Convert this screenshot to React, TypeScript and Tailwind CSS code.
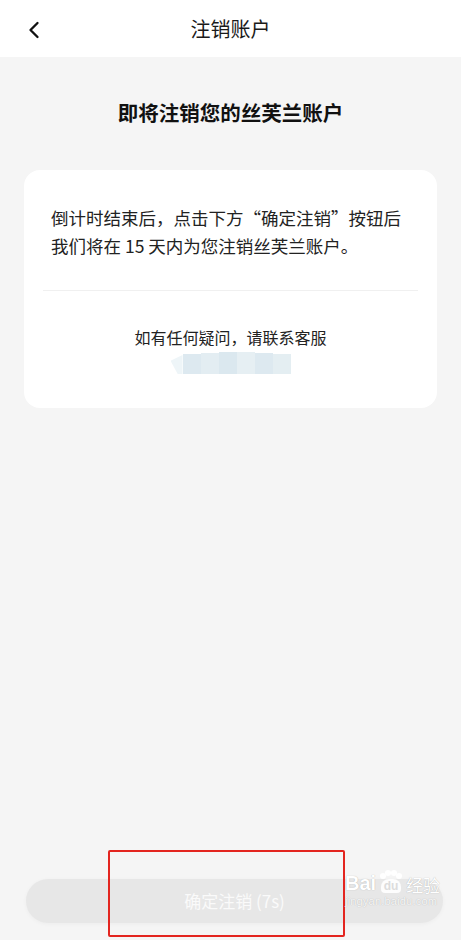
import { ChevronLeft } from "lucide-react";

const font = "font-['Noto_Sans_CJK_SC','Noto_Sans',sans-serif]";

function Header() {
  return (
    <div className="relative flex h-[57px] items-center justify-center bg-white">
      <button className="absolute left-[20px] top-[16px] text-[#111]">
        <ChevronLeft size={28} strokeWidth={2} />
      </button>
      <h1 className="text-[20px] leading-none text-[#1a1a1a]">注销账户</h1>
    </div>
  );
}

function BlurredContact() {
  // the phone number is pixelated in the screenshot
  return (
    <div className="mt-[3px] flex h-[22px] w-[120px] items-end justify-center">
      <div className="h-[19px] w-[12px] bg-[#eef5f8] [clip-path:polygon(0_30%,100%_0,100%_100%,60%_100%)]" />
      <div className="h-[20px] w-[18px] bg-[#dde9f0]" />
      <div className="h-[21px] w-[18px] bg-[#e3edf2]" />
      <div className="h-[22px] w-[18px] bg-[#dbe8ef]" />
      <div className="h-[22px] w-[18px] bg-[#e6eff3]" />
      <div className="h-[21px] w-[18px] bg-[#dde9f0]" />
      <div className="h-[20px] w-[18px] bg-[#e4eef2]" />
    </div>
  );
}

function Watermark() {
  return (
    <div className="pointer-events-none absolute left-[345px] top-[870px] flex flex-col items-start text-white [text-shadow:0_0_1px_rgba(0,0,0,0.3)]">
      <div className="flex items-end gap-[2px]">
        <span className="font-['Liberation_Sans',sans-serif] text-[20px] font-bold leading-none">Bai</span>
        <div className="flex flex-col items-center">
          <svg width="26" height="10" viewBox="0 0 26 10" className="mb-[-1px]">
            <circle cx="5" cy="6" r="3" fill="white" />
            <circle cx="10" cy="3" r="3" fill="white" />
            <circle cx="16" cy="3" r="3" fill="white" />
            <circle cx="21" cy="6" r="3" fill="white" />
          </svg>
          <span className="rounded-t-[8px] rounded-b-[4px] bg-white/90 px-[3px] font-['Liberation_Sans',sans-serif] text-[12px] font-bold leading-[14px] text-[#dcdcdc] [text-shadow:none]">
            du
          </span>
        </div>
        <span className="text-[17px] leading-none">经验</span>
      </div>
      <span className="mt-[3px] font-['Liberation_Sans',sans-serif] text-[11px] leading-none tracking-[0.2px] text-white/90">
        jingyan.baidu.com
      </span>
    </div>
  );
}

export default function App() {
  return (
    <div className={`relative flex min-h-[940px] w-full flex-col bg-[#f5f5f5] ${font}`}>
      <Header />

      <h2 className="mt-[41px] text-center text-[20.5px] font-bold leading-[28px] text-[#111]">
        即将注销您的丝芙兰账户
      </h2>

      <div className="mx-[24px] mt-[44px] rounded-[16px] bg-white pb-[34px] pt-[34px]">
        <p className="px-[27px] text-[17.5px] leading-[28px] text-[#222]">
          倒计时结束后，点击下方“确定注销”按钮后
          <br />
          我们将在 15 天内为您注销丝芙兰账户。
        </p>
        <div className="mx-[19px] mt-[30px] h-px bg-[#f0f0f0]" />
        <div className="mt-[34px] flex flex-col items-center">
          <p className="text-[16px] leading-[24px] text-[#222]">如有任何疑问，请联系客服</p>
          <BlurredContact />
        </div>
      </div>

      <div className="flex-1" />

      <div className="mb-[17px] ml-[26px] mr-[18px] flex h-[44px] items-center justify-center rounded-full bg-[#e7e7e7] shadow-[0_1px_4px_rgba(0,0,0,0.04)]">
        <span className="text-[17px] text-[#fafafa]">确定注销 (7s)</span>
      </div>

      {/* annotation box drawn over the screenshot */}
      <div className="pointer-events-none absolute left-[108px] top-[850px] h-[87px] w-[237px] rounded-[2px] border-2 border-[#e3251f]" />

      <Watermark />
    </div>
  );
}
